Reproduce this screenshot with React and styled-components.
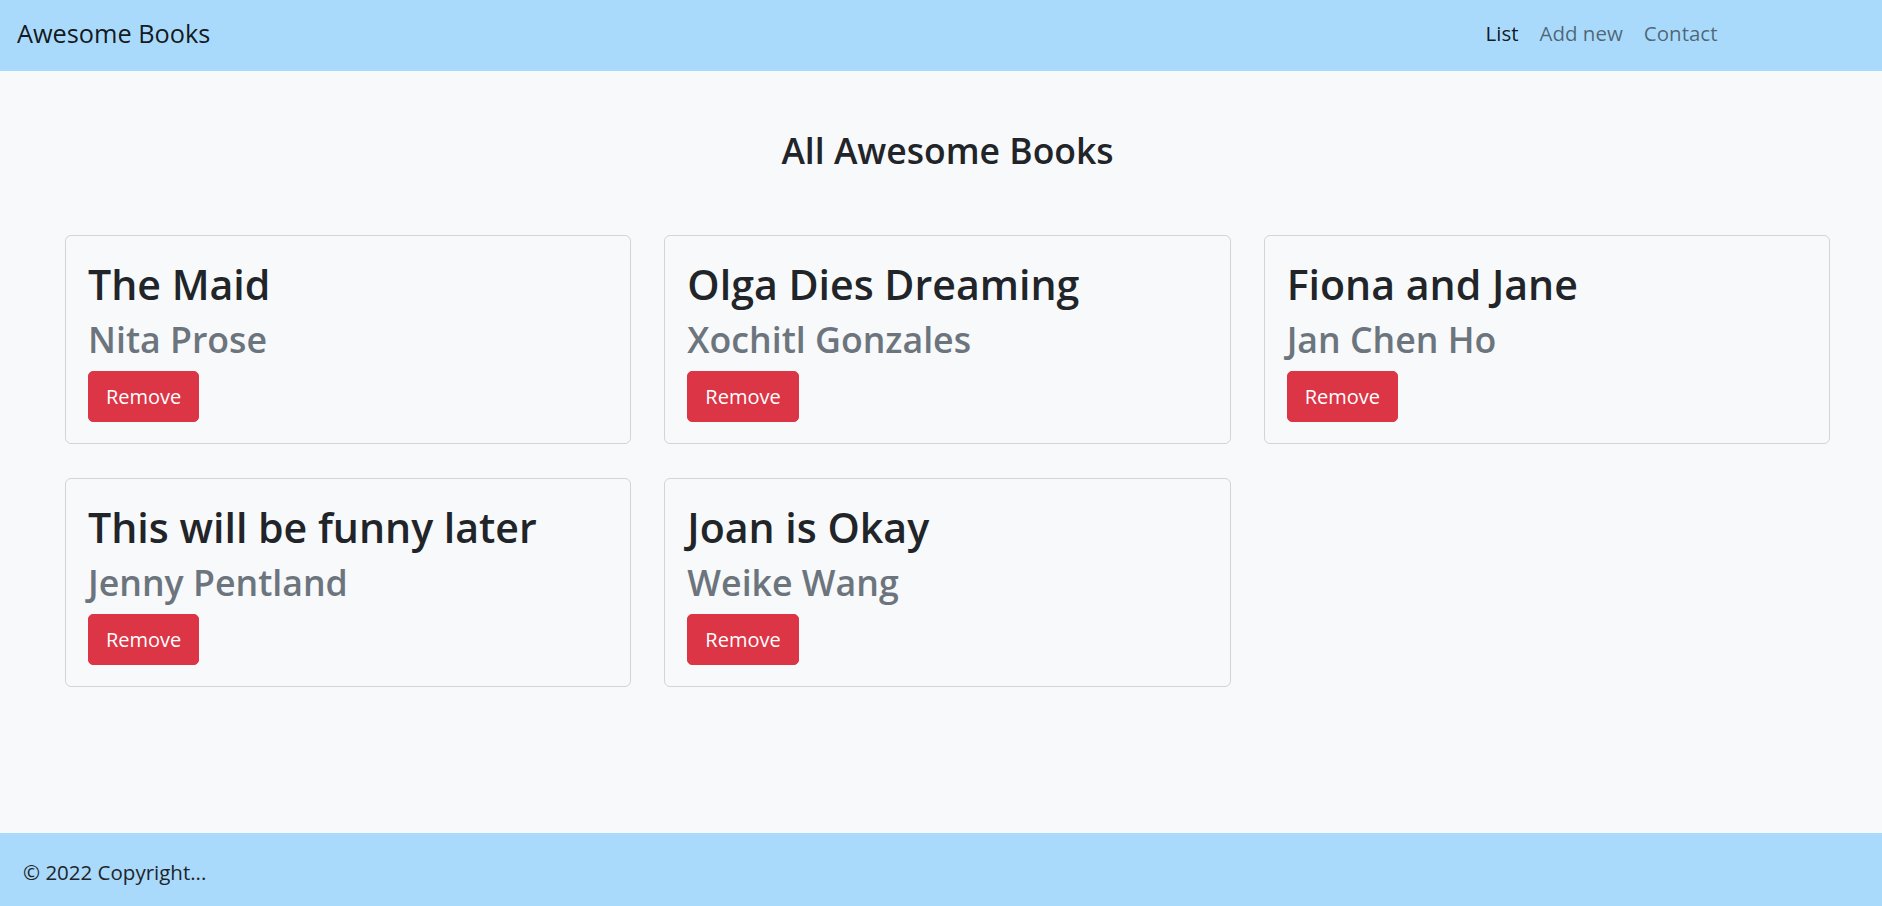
import React from 'react'
import styled, { createGlobalStyle } from 'styled-components'

const colors = {
	sky: '#a9dafc',
	page: '#f8f9fa',
	dark: '#212529',
	muted: '#6c757d',
	danger: '#dc3545',
}

const books = [
	{ id: 1, title: 'The Maid', author: 'Nita Prose' },
	{ id: 2, title: 'Olga Dies Dreaming', author: 'Xochitl Gonzales' },
	{ id: 3, title: 'Fiona and Jane', author: 'Jan Chen Ho' },
	{ id: 4, title: 'This will be funny later', author: 'Jenny Pentland' },
	{ id: 5, title: 'Joan is Okay', author: 'Weike Wang' },
]

const links = [
	{ label: 'List', active: true },
	{ label: 'Add new', active: false },
	{ label: 'Contact', active: false },
]

export default function App() {
	return (
		<>
			<GlobalStyle />
			<Page>
				<Navbar>
					<Brand>Awesome Books</Brand>
					<NavLinks>
						{links.map(link => (
							<NavLink key={link.label} $active={link.active}>{link.label}</NavLink>
						))}
					</NavLinks>
				</Navbar>
				<Main>
					<Heading>All Awesome Books</Heading>
					<Grid>
						{books.map(book => (
							<Card key={book.id}>
								<Title>{book.title}</Title>
								<Author>{book.author}</Author>
								<RemoveButton>Remove</RemoveButton>
							</Card>
						))}
					</Grid>
				</Main>
				<Footer>© 2022 Copyright...</Footer>
			</Page>
		</>
	)
}

const GlobalStyle = createGlobalStyle`
	* { box-sizing: border-box; }
	body {
		margin: 0;
		background: ${colors.page};
		color: ${colors.dark};
		font-family: "Segoe UI", "Open Sans", "Noto Sans", sans-serif;
	}
`

const Page = styled.div`
	min-height: 100vh;
	display: flex;
	flex-direction: column;
`

const Navbar = styled.nav`
	height: 71px;
	padding: 0 154px 5px 17px;
	display: flex;
	align-items: center;
	justify-content: space-between;
	background-color: ${colors.sky};
`

const Brand = styled.a`
	font-size: 25.3px;
	line-height: 36px;
	color: rgba(0, 0, 0, 0.9);
	cursor: pointer;
`

const NavLinks = styled.div`
	display: flex;
	align-items: center;
`

const NavLink = styled.a`
	padding: 0 10.5px;
	font-size: 20.5px;
	line-height: 30px;
	color: ${props => props.$active ? 'rgba(0, 0, 0, 0.9)' : 'rgba(0, 0, 0, 0.55)'};
	cursor: pointer;
`

const Main = styled.main`
	flex: 1;
	padding: 58px 52px 0 65px;
`

const Heading = styled.h2`
	margin: 0 0 63px 0;
	text-align: center;
	font-size: 35.5px;
	line-height: 42.6px;
	font-weight: 600;
`

const Grid = styled.div`
	display: grid;
	grid-template-columns: repeat(3, 1fr);
	column-gap: 33px;
	row-gap: 34px;
`

const Card = styled.div`
	padding: 20px 20px 21px 22px;
	border: 1px solid rgba(0, 0, 0, 0.15);
	border-radius: 6px;
	display: flex;
	flex-direction: column;
	align-items: flex-start;
`

const Title = styled.h1`
	margin: 0;
	font-size: 41.1px;
	line-height: 57.6px;
	font-weight: 600;
	color: ${colors.dark};
`

const Author = styled.h2`
	margin: 3px 0 8.4px 0;
	font-size: 35.7px;
	line-height: 46px;
	font-weight: 600;
	color: ${colors.muted};
`

const RemoveButton = styled.button`
	height: 51px;
	padding: 0 17px;
	border: 1px solid ${colors.danger};
	border-radius: 5px;
	background-color: ${colors.danger};
	color: white;
	font-family: inherit;
	font-size: 20px;
	cursor: pointer;
`

const Footer = styled.footer`
	height: 73px;
	padding: 4px 23px 0 23px;
	display: flex;
	align-items: center;
	background-color: ${colors.sky};
	font-size: 20.5px;
	color: ${colors.dark};
`
